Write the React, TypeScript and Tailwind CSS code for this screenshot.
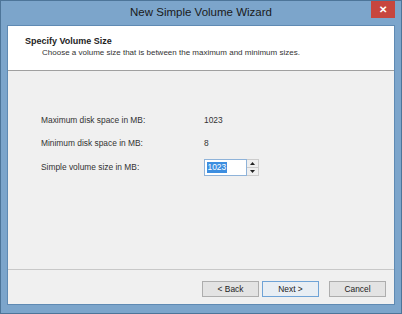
import React from 'react';

const App: React.FC = () => {
  const rows = [
    { label: 'Maximum disk space in MB:', value: '1023' },
    { label: 'Minimum disk space in MB:', value: '8' },
  ];

  return (
    <div
      className="w-[402px] h-[314px] flex flex-col bg-[#7ca5cb] border border-[#4d7599] text-[#1e1e1e]"
      style={{ fontFamily: '"Liberation Sans", Arial, sans-serif' }}
    >
      {/* Title bar */}
      <div className="h-[24px] flex items-start relative">
        <div className="flex-1 h-full flex items-center justify-center text-[11.5px] text-[#1a1a1a]">
          New Simple Volume Wizard
        </div>
        <div className="absolute right-[6px] top-0 w-[24px] h-[17px] bg-[#c7463e] flex items-center justify-center text-white text-[10px] font-bold">
          ✕
        </div>
      </div>

      {/* Client area */}
      <div className="flex-1 mx-[6px] mb-[8px] flex flex-col bg-[#f0f0f0] border border-[#5f8ab3]">
        {/* Header */}
        <div className="h-[45px] bg-white border-b border-[#a0a0a0] pl-[17px] pt-[10px]">
          <div className="text-[9px] font-bold leading-[11px]">Specify Volume Size</div>
          <div className="pl-[17px] text-[8px] leading-[12px] text-[#333]">
            Choose a volume size that is between the maximum and minimum sizes.
          </div>
        </div>

        {/* Body */}
        <div className="flex-1 pl-[33px] pt-[43px] flex flex-col gap-[10px] text-[8.4px]">
          {rows.map((r) => (
            <div key={r.label} className="flex items-center h-[13px]">
              <span className="w-[163px] text-[#333]">{r.label}</span>
              <span className="text-[#333]">{r.value}</span>
            </div>
          ))}
          <div className="flex items-center h-[17px] -mt-[1px]">
            <span className="w-[163px] text-[#333]">Simple volume size in MB:</span>
            <div className="flex h-[17px]">
              <div className="w-[43px] h-full bg-white border border-[#8fb3d9] flex items-center pl-[2px]">
                <span className="bg-[#3d8ee0] text-white leading-[11px] px-[0.5px]">1023</span>
              </div>
              <div className="w-[12px] h-full flex flex-col border border-[#cccccc] border-l-0 bg-[#efefef]">
                <div className="flex-1 flex items-center justify-center border-b border-[#cccccc]">
                  <svg width="5" height="3" viewBox="0 0 5 3"><path d="M0 3 L2.5 0 L5 3 Z" fill="#222" /></svg>
                </div>
                <div className="flex-1 flex items-center justify-center">
                  <svg width="5" height="3" viewBox="0 0 5 3"><path d="M0 0 L2.5 3 L5 0 Z" fill="#222" /></svg>
                </div>
              </div>
            </div>
          </div>
        </div>

        {/* Footer */}
        <div className="h-[35px] border-t border-[#c8c8c8] flex items-start justify-end pt-[11px] pr-[8px] text-[8.4px]">
          <button className="w-[57px] h-[16px] border border-[#adadad] bg-[#e3e3e3] flex items-center justify-center text-[#222]">
            &lt; Back
          </button>
          <button className="w-[57px] h-[16px] ml-[3px] border border-[#6fa3d6] bg-[#e8eef4] flex items-center justify-center text-[#222]">
            Next &gt;
          </button>
          <button className="w-[57px] h-[16px] ml-[10px] border border-[#adadad] bg-[#e3e3e3] flex items-center justify-center text-[#222]">
            Cancel
          </button>
        </div>
      </div>
    </div>
  );
};

export default App;
